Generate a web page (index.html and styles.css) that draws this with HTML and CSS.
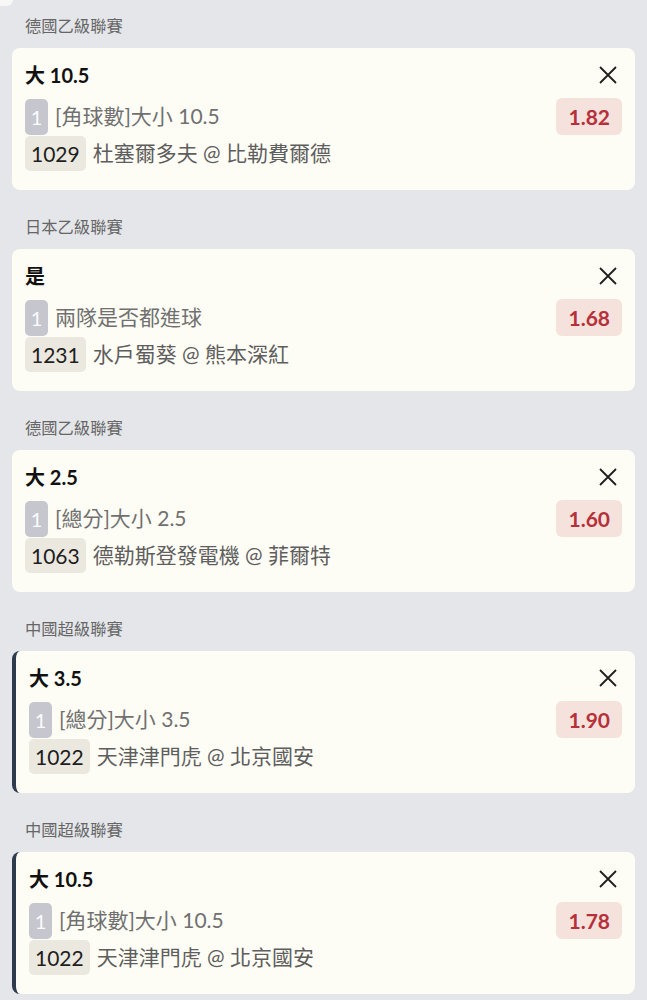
FILE: index.html
```html
<!DOCTYPE html>
<html lang="zh-Hant">
<head>
<meta charset="utf-8">
<link rel="stylesheet" href="styles.css">
</head>
<body>
<div class="page">
  <div class="top-edge"></div>

  <section class="group">
    <div class="league">德國乙級聯賽</div>
    <div class="card">
      <div class="head"><span class="title">大 10.5</span><span class="close"><svg width="18" height="18" viewBox="0 0 18 18"><path d="M1 1L17 17M17 1L1 17" stroke="#1e1e1e" stroke-width="1.8" fill="none"/></svg></span></div>
      <div class="market-row"><span class="num">1</span><span class="market">[角球數]大小 10.5</span><span class="odds">1.82</span></div>
      <div class="match-row"><span class="code">1029</span><span class="teams">杜塞爾多夫 @ 比勒費爾德</span></div>
    </div>
  </section>

  <section class="group">
    <div class="league">日本乙級聯賽</div>
    <div class="card">
      <div class="head"><span class="title">是</span><span class="close"><svg width="18" height="18" viewBox="0 0 18 18"><path d="M1 1L17 17M17 1L1 17" stroke="#1e1e1e" stroke-width="1.8" fill="none"/></svg></span></div>
      <div class="market-row"><span class="num">1</span><span class="market">兩隊是否都進球</span><span class="odds">1.68</span></div>
      <div class="match-row"><span class="code">1231</span><span class="teams">水戶蜀葵 @ 熊本深紅</span></div>
    </div>
  </section>

  <section class="group">
    <div class="league">德國乙級聯賽</div>
    <div class="card">
      <div class="head"><span class="title">大 2.5</span><span class="close"><svg width="18" height="18" viewBox="0 0 18 18"><path d="M1 1L17 17M17 1L1 17" stroke="#1e1e1e" stroke-width="1.8" fill="none"/></svg></span></div>
      <div class="market-row"><span class="num">1</span><span class="market">[總分]大小 2.5</span><span class="odds">1.60</span></div>
      <div class="match-row"><span class="code">1063</span><span class="teams">德勒斯登發電機 @ 菲爾特</span></div>
    </div>
  </section>

  <section class="group">
    <div class="league">中國超級聯賽</div>
    <div class="card card-marked">
      <div class="head"><span class="title">大 3.5</span><span class="close"><svg width="18" height="18" viewBox="0 0 18 18"><path d="M1 1L17 17M17 1L1 17" stroke="#1e1e1e" stroke-width="1.8" fill="none"/></svg></span></div>
      <div class="market-row"><span class="num">1</span><span class="market">[總分]大小 3.5</span><span class="odds">1.90</span></div>
      <div class="match-row"><span class="code">1022</span><span class="teams">天津津門虎 @ 北京國安</span></div>
    </div>
  </section>

  <section class="group">
    <div class="league">中國超級聯賽</div>
    <div class="card card-marked">
      <div class="head"><span class="title">大 10.5</span><span class="close"><svg width="18" height="18" viewBox="0 0 18 18"><path d="M1 1L17 17M17 1L1 17" stroke="#1e1e1e" stroke-width="1.8" fill="none"/></svg></span></div>
      <div class="market-row"><span class="num">1</span><span class="market">[角球數]大小 10.5</span><span class="odds">1.78</span></div>
      <div class="match-row"><span class="code">1022</span><span class="teams">天津津門虎 @ 北京國安</span></div>
    </div>
  </section>
</div>
</body>
</html>
```

FILE: styles.css
```css
* { box-sizing: border-box; }
html, body { margin: 0; padding: 0; }
body {
  background: #e5e6ea;
  font-family: "Lato", "Noto Sans CJK TC", sans-serif;
  color: #1e1e1e;
  width: 647px;
  height: 1000px;
  overflow: hidden;
}
.page { padding: 0 12px; }
.top-edge {
  width: 13px;
  height: 6px;
  margin-left: -12px;
  background: #f7f7f5;
  border-bottom-right-radius: 8px;
}
.group + .group { margin-top: 11px; }
.league {
  padding: 16px 0 12px 13px;
  font-size: 16.3px;
  line-height: 20px;
  color: #666;
}
.group:first-of-type .league { padding-top: 10px; }
.card {
  background: #fefdf5;
  border-radius: 8px;
  padding: 14px 13px 19px 13px;
  height: 142px;
}
.card-marked {
  border-left: 4px solid #2e3b4f;
  padding-left: 13px;
}
.head {
  display: flex;
  justify-content: space-between;
  align-items: center;
  height: 26px;
}
.title {
  font-size: 20px;
  font-weight: 700;
  line-height: 26px;
  color: #111;
}
.close {
  display: flex;
  width: 24px;
  justify-content: center;
  margin-right: 2px;
}
.market-row {
  display: flex;
  align-items: center;
  height: 37px;
  margin-top: 10px;
}
.num {
  background: #c6c6cf;
  color: #fbfbfd;
  font-size: 20px;
  line-height: 36px;
  height: 36px;
  width: 23px;
  text-align: center;
  border-radius: 5px;
}
.market {
  flex: 1;
  margin-left: 7px;
  font-size: 21px;
  line-height: 26px;
  padding-bottom: 1px;
  color: #707070;
}
.odds {
  background: #f6e2dc;
  color: #b5303a;
  font-size: 21px;
  font-weight: 700;
  line-height: 37px;
  height: 37px;
  padding: 0 12px;
  border-radius: 6px;
}
.match-row {
  display: flex;
  align-items: center;
  height: 35px;
  margin-top: 1px;
}
.code {
  background: #ebe8e0;
  color: #1e1e1e;
  font-size: 21px;
  line-height: 35px;
  height: 35px;
  padding: 0 6px;
  border-radius: 5px;
}
.teams {
  margin-left: 7px;
  font-size: 21px;
  line-height: 26px;
  padding-bottom: 1px;
  color: #5e5e5e;
}
```
